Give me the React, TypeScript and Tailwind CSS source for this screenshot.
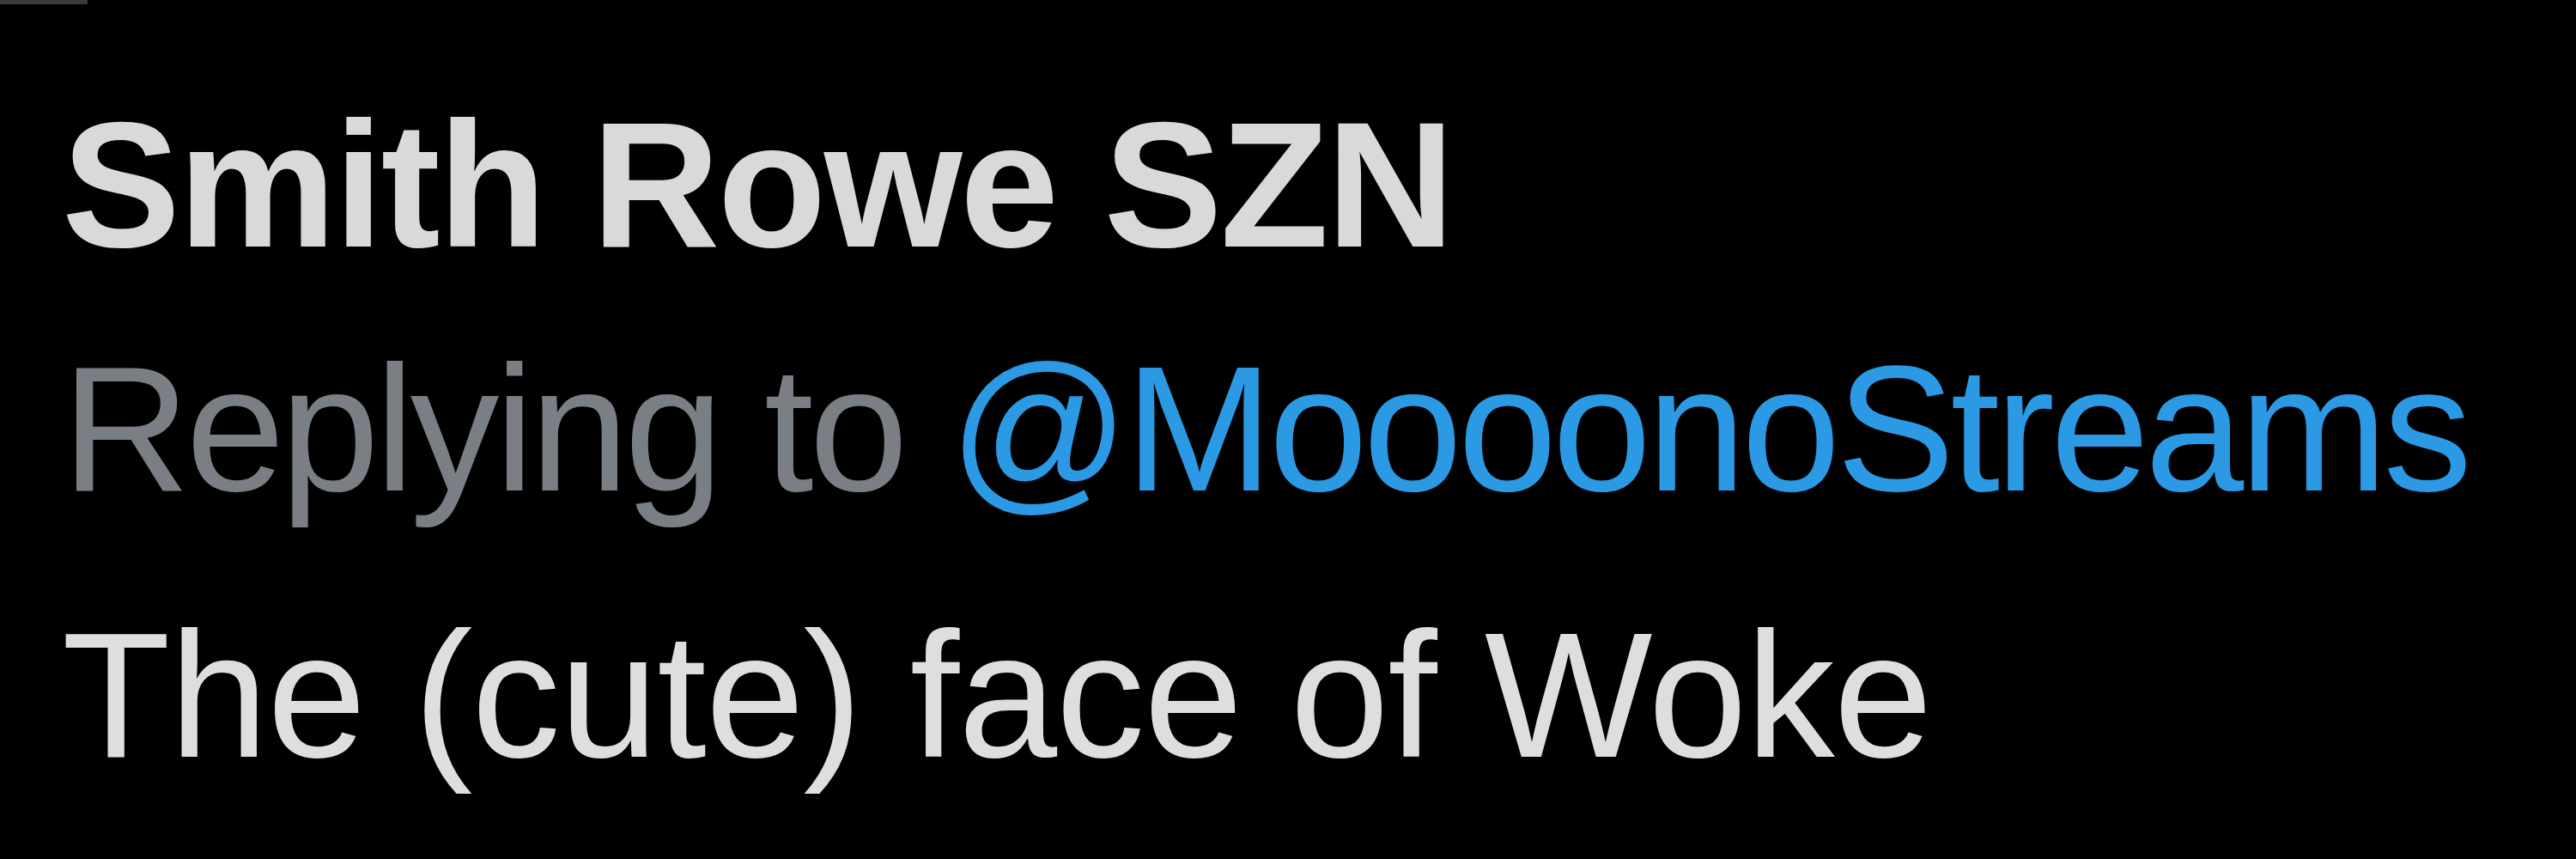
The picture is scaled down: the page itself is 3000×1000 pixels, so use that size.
export default function App() {
  return (
    <div className="relative w-[3000px] h-[1000px] bg-black overflow-hidden font-['Liberation_Sans',Arial,sans-serif]">
      <div className="absolute left-0 top-0 w-[102px] h-[5px] bg-[#3a3a3c]" />
      <div className="flex flex-col pl-[72px] pt-[74px] whitespace-nowrap">
        <div className="text-[207px] leading-[284px] font-bold text-[#d9d9d9] tracking-[-2.6px]">
          Smith Rowe SZN
        </div>
        <div className="text-[207px] leading-[284px] tracking-[-5px]">
          <span className="text-[#7a7f85]">Replying to </span>
          <span className="text-[#2b99e3]">@MoooonoStreams</span>
        </div>
        <div className="mt-[26px] text-[207px] leading-[284px] text-[#dedede] tracking-[-1.2px]">
          The (cute) face of Woke
        </div>
      </div>
    </div>
  );
}
